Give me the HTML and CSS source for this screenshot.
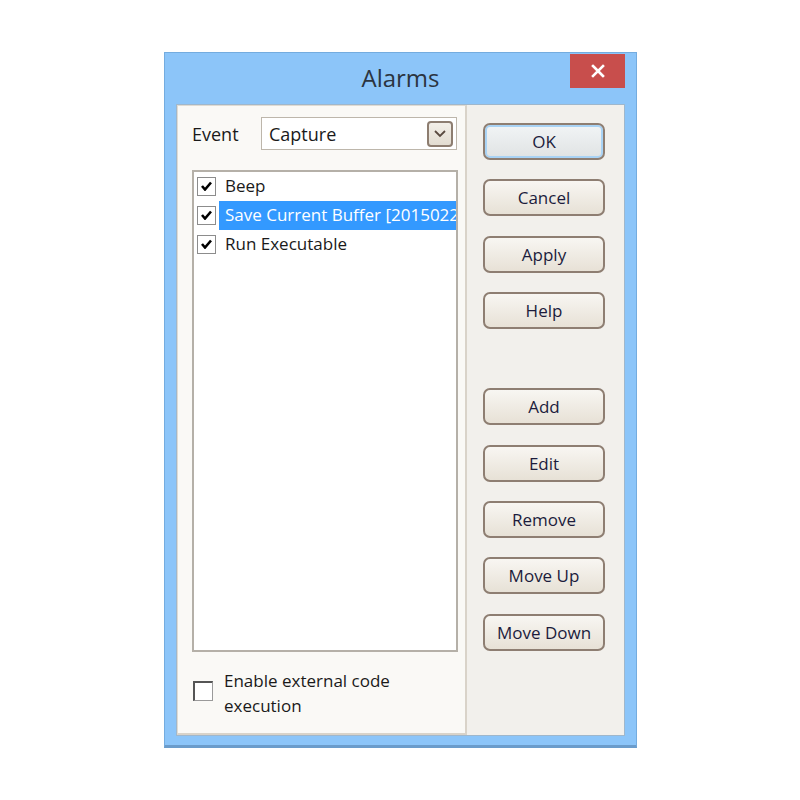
FILE: index.html
```html
<!DOCTYPE html>
<html>

<head>
    <meta charset="utf-8" />
    <title>Alarms</title>
    <link rel="stylesheet" href="styles.css">
</head>

<body>
    <div class="window">
        <div class="titlebar">
            <span class="title">Alarms</span>
            <button class="close-btn">
                <svg width="14" height="14" viewBox="0 0 14 14">
                    <path d="M2 2 L12 12 M12 2 L2 12" stroke="#fff" stroke-width="2.6" stroke-linecap="square" />
                </svg>
            </button>
        </div>

        <div class="client">
            <div class="panel">
                <div class="event-row">
                    <span class="event-label">Event</span>
                    <div class="combo">
                        <span class="combo-value">Capture</span>
                        <span class="combo-btn">
                            <svg width="12" height="8" viewBox="0 0 12 8">
                                <path d="M1 1 L6 6 L11 1" fill="none" stroke="#5a4a40" stroke-width="1.8" />
                            </svg>
                        </span>
                    </div>
                </div>

                <div class="alarm-list">
                    <div class="item">
                        <span class="check checked"></span>
                        <span class="item-text">Beep</span>
                    </div>
                    <div class="item">
                        <span class="check checked"></span>
                        <span class="item-text selected">Save Current Buffer [20150225-142301].pcap</span>
                    </div>
                    <div class="item">
                        <span class="check checked"></span>
                        <span class="item-text">Run Executable</span>
                    </div>
                </div>

                <div class="enable-row">
                    <span class="check big"></span>
                    <span class="enable-text">Enable external code<br>execution</span>
                </div>
            </div>

            <div class="buttons">
                <button class="btn default">OK</button>
                <button class="btn">Cancel</button>
                <button class="btn">Apply</button>
                <button class="btn">Help</button>
                <div class="spacer"></div>
                <button class="btn">Add</button>
                <button class="btn">Edit</button>
                <button class="btn">Remove</button>
                <button class="btn">Move Up</button>
                <button class="btn">Move Down</button>
            </div>
        </div>
    </div>
</body>

</html>
```

FILE: styles.css
```css
* {
    box-sizing: border-box;
}

body {
    margin: 0;
    padding: 52px 0 0 164px;
    background-color: white;
    font-family: 'Open Sans', 'Noto Sans', sans-serif;
}

.window {
    width: 473px;
    height: 696px;
    background-color: #8cc5f9;
    border: 1px solid #74acdf;
    border-bottom: 3px solid #6b9ccb;
    display: flex;
    flex-direction: column;
}

.titlebar {
    height: 51px;
    position: relative;
    display: flex;
    justify-content: center;
    align-items: center;
}

.title {
    font-size: 24px;
    color: #2b3440;
    margin-top: -2px;
}

.close-btn {
    position: absolute;
    top: 1px;
    right: 11px;
    width: 55px;
    height: 34px;
    border: none;
    background-color: #c84e4c;
    padding: 0;
    display: flex;
    align-items: center;
    justify-content: center;
}

.client {
    margin: 0 11px;
    height: 632px;
    background-color: #f2f0ec;
    border: 1px solid #9fb7cc;
    display: flex;
}

.panel {
    width: 291px;
    background-color: #faf9f6;
    border: 1px solid #e0dbd2;
    border-right: 2px solid #d9d3c9;
    border-bottom: 2px solid #d9d3c9;
    padding: 11px 7px 0 14px;
    display: flex;
    flex-direction: column;
}

.event-row {
    display: flex;
    align-items: center;
    height: 33px;
}

.event-label {
    font-size: 18px;
    color: #1a1a1a;
    width: 69px;
}

.combo {
    width: 196px;
    height: 33px;
    border: 1px solid #bdb6ab;
    background-color: #fff;
    display: flex;
    align-items: center;
    justify-content: space-between;
    padding: 0 3px 0 7px;
}

.combo-value {
    font-size: 18px;
    color: #1a1a1a;
}

.combo-btn {
    width: 26px;
    height: 26px;
    border: 2px solid #8d7d70;
    border-radius: 4px;
    background: linear-gradient(#f3efe8, #e2dcd1);
    display: flex;
    align-items: center;
    justify-content: center;
}

.alarm-list {
    margin-top: 20px;
    width: 266px;
    height: 482px;
    border: 2px solid #b5b0a8;
    background-color: #fff;
    overflow: hidden;
}

.item {
    display: flex;
    align-items: center;
    height: 29px;
    white-space: nowrap;
}

.check {
    width: 19px;
    height: 19px;
    border: 1px solid #8c8c8c;
    background-color: #fff;
    margin: 0 3px 0 3px;
    flex-shrink: 0;
    position: relative;
}

.check.checked::after {
    content: '';
    position: absolute;
    left: 3px;
    top: 3px;
    width: 11px;
    height: 10px;
    background: no-repeat center;
    background-image: url("data:image/svg+xml,%3Csvg xmlns='http://www.w3.org/2000/svg' viewBox='0 0 11 10'%3E%3Cpath d='M1 5 L4 8.5 L10 1.5' fill='none' stroke='black' stroke-width='2.6'/%3E%3C/svg%3E");
}

.item-text {
    font-size: 17px;
    color: #1a1a1a;
    height: 29px;
    line-height: 28px;
    padding-left: 6px;
}

.item-text.selected {
    background-color: #3399ff;
    color: #fff;
    flex: 1;
    min-width: 0;
    overflow: hidden;
}

.enable-row {
    display: flex;
    align-items: flex-start;
    margin-top: 16px;
}

.check.big {
    width: 20px;
    height: 20px;
    border: 1px solid #9a9a9a;
    border-top: 2px solid #555;
    border-left: 2px solid #555;
    margin: 13px 11px 0 1px;
}

.enable-text {
    font-size: 17px;
    line-height: 25px;
    color: #1a1a1a;
}

.buttons {
    flex: 1;
    display: flex;
    flex-direction: column;
    gap: 19.3px;
    padding: 18px 19px 0 16px;
}

.spacer {
    height: 21px;
}

.btn {
    height: 37px;
    width: 122px;
    border: 2px solid #8e7e72;
    border-radius: 7px;
    background: linear-gradient(#f8f6f2, #e7e1d6);
    font-family: 'Open Sans', 'Noto Sans', sans-serif;
    font-size: 17px;
    font-weight: 500;
    color: #1c1c3c;
    padding: 0;
}

.btn.default {
    box-shadow: inset 0 0 0 2px #a9d3f5;
    background: linear-gradient(#f1f4f6, #e0e3e3);
}
```
